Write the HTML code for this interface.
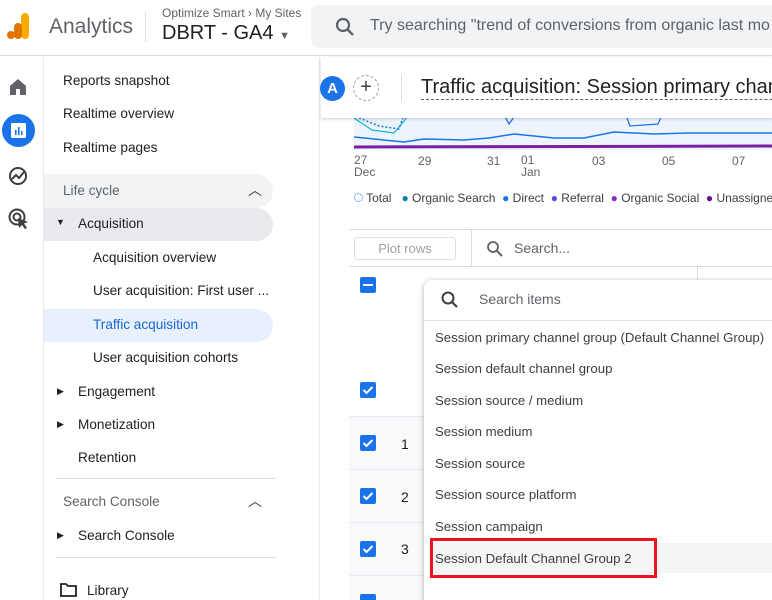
<!DOCTYPE html>
<html><head><meta charset="utf-8"><style>
*{box-sizing:border-box;margin:0;padding:0}
html,body{width:772px;height:600px;overflow:hidden}
body{position:relative;background:#fff;font-family:"Liberation Sans",Arial,sans-serif;color:#202124}
#w{position:absolute;left:0;top:0;width:772px;height:600px;overflow:hidden}
.a{position:absolute;white-space:nowrap}
.nav{font-size:13.6px;color:#202124}
.it{font-size:13.2px;color:#3c4043}
</style></head><body><div id="w">
<div class="a" style="left:0;top:0;width:772px;height:56px;border-bottom:1px solid #dadce0;background:#fff"></div>
<svg class="a" style="left:6px;top:12px" width="26" height="28"><rect x="15" y="1" width="8" height="26" rx="4" fill="#f9ab00"/><rect x="8" y="11" width="8" height="16" rx="4" fill="#e37400"/><circle cx="5" cy="23" r="4" fill="#e37400"/></svg>
<div class="a" style="left:49px;top:15px;font-size:21px;color:#5f6368">Analytics</div>
<div class="a" style="left:145px;top:12px;width:1px;height:30px;background:#dadce0"></div>
<div class="a" style="left:162px;top:6px;font-size:12px;color:#5f6368">Optimize Smart › My Sites</div>
<div class="a" style="left:162px;top:22px;font-size:20px;color:#202124">DBRT - GA4 <span style="font-size:11px;color:#5f6368">▼</span></div>
<div class="a" style="left:311px;top:5px;width:470px;height:43px;background:#f1f3f4;border-radius:8px"></div>
<svg class="a" style="left:334px;top:16px" width="22" height="22"><circle cx="9" cy="9" r="6" fill="none" stroke="#5f6368" stroke-width="2.2"/><path d="M13.5 13.5L19 19" stroke="#5f6368" stroke-width="2.5"/></svg>
<div class="a" style="left:370px;top:17px;font-size:16px;color:#5f6368">Try searching "trend of conversions from organic last mo</div>
<div class="a" style="left:0;top:57px;width:44px;height:543px;background:#fff;border-right:1px solid #e8eaed"></div>
<svg class="a" style="left:9px;top:78px" width="18" height="18"><path d="M1 8L9 1L17 8V17H1Z" fill="#5f6368"/><rect x="7" y="11" width="4" height="6" fill="#fff"/></svg>
<div class="a" style="left:2px;top:114px;width:33px;height:33px;border-radius:50%;background:#1a73e8"></div>
<svg class="a" style="left:10px;top:122px" width="17" height="17"><rect x="1" y="1" width="15" height="15" rx="1" fill="#fff"/><rect x="5" y="8" width="1.6" height="5" fill="#1a73e8"/><rect x="8" y="5" width="1.6" height="8" fill="#1a73e8"/><rect x="11" y="9" width="1.6" height="4" fill="#1a73e8"/></svg>
<svg class="a" style="left:8px;top:166px" width="22" height="22"><circle cx="10" cy="10" r="8" fill="none" stroke="#3c4043" stroke-width="2"/><path d="M4 13L8 9L11 12L16 6" fill="none" stroke="#3c4043" stroke-width="2"/></svg>
<svg class="a" style="left:8px;top:208px" width="22" height="22"><circle cx="9" cy="9" r="7.5" fill="none" stroke="#3c4043" stroke-width="2"/><circle cx="9" cy="9" r="3.5" fill="none" stroke="#3c4043" stroke-width="2"/><path d="M10 10L20 14L16 15.5L19 20L17 21L14 17L11 20Z" fill="#3c4043"/></svg>
<div class="a" style="left:44px;top:57px;width:276px;height:543px;border-right:1px solid #e8eaed"></div>
<div class="a nav" style="left:63px;top:73px">Reports snapshot</div>
<div class="a nav" style="left:63px;top:106px">Realtime overview</div>
<div class="a nav" style="left:63px;top:140px">Realtime pages</div>
<div class="a" style="left:44px;top:174px;width:229px;height:34px;background:#f1f3f4;border-radius:0 17px 17px 0"></div>
<div class="a" style="left:63px;top:183px;font-size:13.6px;color:#5f6368">Life cycle</div>
<div class="a" style="left:248px;top:180px;font-size:14px;color:#3c4043">︿</div>
<div class="a" style="left:44px;top:208px;width:229px;height:33px;background:#e8eaed;border-radius:0 17px 17px 0"></div>
<div class="a" style="left:56px;top:217px;font-size:9px">▼</div>
<div class="a nav" style="left:78px;top:216px">Acquisition</div>
<div class="a nav" style="left:93px;top:250px">Acquisition overview</div>
<div class="a nav" style="left:93px;top:283px">User acquisition: First user ...</div>
<div class="a" style="left:44px;top:309px;width:229px;height:33px;background:#e8f0fe;border-radius:0 17px 17px 0"></div>
<div class="a nav" style="left:93px;top:317px;color:#1967d2">Traffic acquisition</div>
<div class="a nav" style="left:93px;top:350px">User acquisition cohorts</div>
<div class="a" style="left:57px;top:386px;font-size:9px">▶</div>
<div class="a nav" style="left:78px;top:384px">Engagement</div>
<div class="a" style="left:57px;top:419px;font-size:9px">▶</div>
<div class="a nav" style="left:78px;top:417px">Monetization</div>
<div class="a nav" style="left:78px;top:450px">Retention</div>
<div class="a" style="left:56px;top:478px;width:220px;height:1px;background:#dadce0"></div>
<div class="a" style="left:63px;top:494px;font-size:13.6px;color:#5f6368">Search Console</div>
<div class="a" style="left:248px;top:491px;font-size:14px;color:#3c4043">︿</div>
<div class="a" style="left:57px;top:530px;font-size:9px">▶</div>
<div class="a nav" style="left:78px;top:528px">Search Console</div>
<div class="a" style="left:56px;top:557px;width:220px;height:1px;background:#dadce0"></div>
<svg class="a" style="left:60px;top:583px" width="17" height="14"><path d="M1 1H6L8 3H16V13H1Z" fill="none" stroke="#202124" stroke-width="1.8"/></svg>
<div class="a nav" style="left:87px;top:583px">Library</div>
<div class="a" style="left:354px;top:118px;width:418px;height:32px;background:#eef4fd"></div>
<svg class="a" style="left:354px;top:110px" width="418" height="44"><path d="M0 8L18 20L40 23L55 5" fill="none" stroke="#12b5cb" stroke-width="1.2"/><path d="M5 8L25 16L45 19L50 5" fill="none" stroke="#1a73e8" stroke-width="1.5" stroke-dasharray="2 2"/><path d="M150 5L155 14L160 7" fill="none" stroke="#1a73e8" stroke-width="1.3"/><path d="M272 5L276 16L304 14L308 5" fill="none" stroke="#1a73e8" stroke-width="1.2"/><path d="M0 27L50 32L70 29L110 30L135 28L160 24L180 26L200 28L230 28L260 22L300 24L335 23L418 23" fill="none" stroke="#1a73e8" stroke-width="1.5"/><path d="M0 37L418 36" stroke="#7b1fa2" stroke-width="3"/></svg>
<div class="a" style="left:354px;top:154px;font-size:12px;color:#5f6368;line-height:12px">27<br>Dec</div>
<div class="a" style="left:418px;top:154px;font-size:12px;color:#5f6368">29</div>
<div class="a" style="left:487px;top:154px;font-size:12px;color:#5f6368">31</div>
<div class="a" style="left:521px;top:154px;font-size:12px;color:#5f6368;line-height:12px">01<br>Jan</div>
<div class="a" style="left:592px;top:154px;font-size:12px;color:#5f6368">03</div>
<div class="a" style="left:662px;top:154px;font-size:12px;color:#5f6368">05</div>
<div class="a" style="left:732px;top:154px;font-size:12px;color:#5f6368">07</div>
<div class="a" style="left:354px;top:191px;font-size:12px;color:#3c4043">
<span style="display:inline-block;width:9px;height:9px;border:1.5px dotted #1a73e8;border-radius:50%"></span> Total&nbsp;&nbsp;
<span style="color:#0b7fab">●</span> Organic Search&nbsp;&nbsp;<span style="color:#1a73e8">●</span> Direct&nbsp;&nbsp;<span style="color:#4d4cf1">●</span> Referral&nbsp;&nbsp;<span style="color:#8430ce">●</span> Organic Social&nbsp;&nbsp;<span style="color:#6a0d8f">●</span> Unassigned</div>
<div class="a" style="left:349px;top:229px;width:423px;height:1px;background:#dadce0"></div>
<div class="a" style="left:354px;top:237px;width:102px;height:23px;border:1px solid #e0e0e0;border-radius:3px;font-size:13px;color:#9aa0a6;text-align:center;line-height:21px">Plot rows</div>
<div class="a" style="left:471px;top:230px;width:1px;height:36px;background:#dadce0"></div>
<svg class="a" style="left:486px;top:240px" width="18" height="18"><circle cx="7" cy="7" r="5" fill="none" stroke="#5f6368" stroke-width="1.8"/><path d="M11 11L16 16" stroke="#5f6368" stroke-width="2"/></svg>
<div class="a" style="left:514px;top:240px;font-size:14px;color:#5f6368">Search...</div>
<div class="a" style="left:349px;top:266px;width:423px;height:1px;background:#dadce0"></div>
<div class="a" style="left:697px;top:266px;width:1px;height:20px;background:#dadce0"></div>
<div class="a" style="left:360px;top:277px;width:16px;height:16px;background:#1a73e8;border-radius:2px"></div>
<div class="a" style="left:363px;top:284px;width:10px;height:2px;background:#fff"></div>
<div class="a" style="left:349px;top:416px;width:75px;height:184px;background:#f8f9fa"></div>
<div class="a" style="left:349px;top:416px;width:75px;height:1px;background:#e8eaed"></div>
<div class="a" style="left:349px;top:469px;width:75px;height:1px;background:#e8eaed"></div>
<div class="a" style="left:349px;top:522px;width:75px;height:1px;background:#e8eaed"></div>
<div class="a" style="left:349px;top:575px;width:75px;height:1px;background:#e8eaed"></div>
<svg class="a" style="left:360px;top:382px" width="16" height="218">
<g><rect width="16" height="16" rx="2" fill="#1a73e8"/><path d="M3.5 8L6.5 11L12.5 5" fill="none" stroke="#fff" stroke-width="2"/></g>
<g transform="translate(0,53)"><rect width="16" height="16" rx="2" fill="#1a73e8"/><path d="M3.5 8L6.5 11L12.5 5" fill="none" stroke="#fff" stroke-width="2"/></g>
<g transform="translate(0,106)"><rect width="16" height="16" rx="2" fill="#1a73e8"/><path d="M3.5 8L6.5 11L12.5 5" fill="none" stroke="#fff" stroke-width="2"/></g>
<g transform="translate(0,159)"><rect width="16" height="16" rx="2" fill="#1a73e8"/><path d="M3.5 8L6.5 11L12.5 5" fill="none" stroke="#fff" stroke-width="2"/></g>
<g transform="translate(0,212)"><rect width="16" height="16" rx="2" fill="#1a73e8"/></g>
</svg>
<div class="a" style="left:401px;top:436px;font-size:14px">1</div>
<div class="a" style="left:401px;top:489px;font-size:14px">2</div>
<div class="a" style="left:401px;top:541px;font-size:14px">3</div>
<div class="a" style="left:321px;top:57px;width:451px;height:61px;background:#fff;box-shadow:0 1px 3px rgba(60,64,67,.25)"></div>
<div class="a" style="left:320px;top:76px;width:25px;height:25px;border-radius:50%;background:#1a73e8;color:#fff;font-size:15px;font-weight:bold;text-align:center;line-height:25px">A</div>
<div class="a" style="left:353px;top:75px;width:26px;height:26px;border-radius:50%;border:1px dashed #9aa0a6;color:#3c4043;font-size:20px;text-align:center;line-height:23px">+</div>
<div class="a" style="left:401px;top:75px;width:1px;height:26px;background:#dadce0"></div>
<div class="a" style="left:421px;top:75px;font-size:20px;color:#202124;border-bottom:1px dashed #5f6368;line-height:24px">Traffic acquisition: Session primary channel group</div>
<div class="a" style="left:424px;top:280px;width:360px;height:330px;background:#fff;border-radius:8px;box-shadow:0 1px 4px rgba(60,64,67,.3),0 2px 8px rgba(60,64,67,.15)"></div>
<svg class="a" style="left:440px;top:290px" width="20" height="20"><circle cx="8" cy="8" r="5.5" fill="none" stroke="#3c4043" stroke-width="2"/><path d="M12 12L17 17" stroke="#3c4043" stroke-width="2.2"/></svg>
<div class="a" style="left:479px;top:291px;font-size:14px;color:#5f6368">Search items</div>
<div class="a" style="left:424px;top:320px;width:348px;height:1px;background:#e0e0e0"></div>
<div class="a" style="left:429px;top:543px;width:343px;height:30px;background:#f5f5f5"></div>
<div class="a it" style="left:435px;top:330px">Session primary channel group (Default Channel Group)</div>
<div class="a it" style="left:435px;top:361px">Session default channel group</div>
<div class="a it" style="left:435px;top:393px">Session source / medium</div>
<div class="a it" style="left:435px;top:424px">Session medium</div>
<div class="a it" style="left:435px;top:456px">Session source</div>
<div class="a it" style="left:435px;top:487px">Session source platform</div>
<div class="a it" style="left:435px;top:519px">Session campaign</div>
<div class="a it" style="left:435px;top:551px">Session Default Channel Group 2</div>
<div class="a" style="left:430px;top:538px;width:227px;height:40px;border:3px solid #e8141f"></div>
</div></body></html>
